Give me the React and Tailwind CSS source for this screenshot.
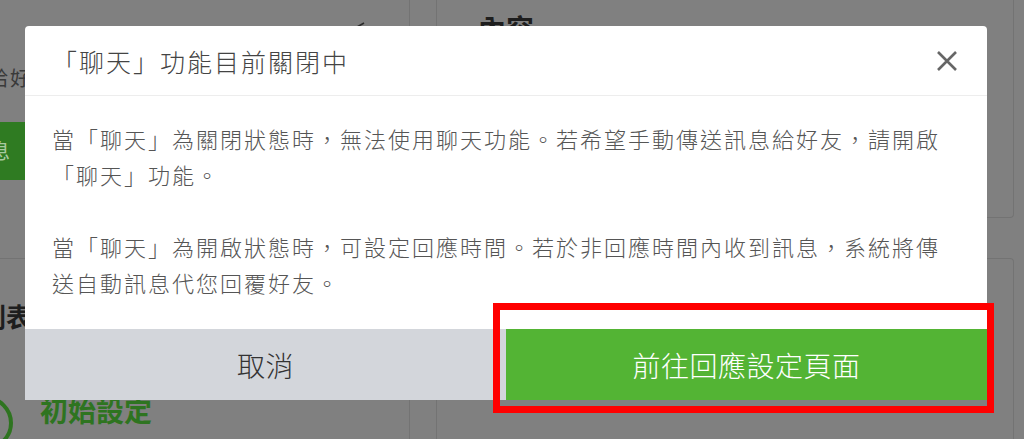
export default function App() {
  const cjk = { fontFamily: '"Noto Sans CJK TC", "Noto Sans", sans-serif' };
  return (
    <div lang="zh-TW" style={cjk} className="relative w-[1024px] h-[439px] overflow-hidden bg-[#808080]">
      {/* dimmed page underneath */}
      <div className="flex h-full">
        <div className="w-[410px] shrink-0 flex flex-col border-r border-[#737373]">
          <div className="h-[259px] shrink-0 border-b border-[#737373] pt-[66px]">
            <div className="ml-[-12px] text-[20px] leading-[24px] tracking-[2px] text-[#3a3a3a] whitespace-nowrap">給好友傳送訊息</div>
            <div className="mt-[32px] ml-[-60px] w-[200px] h-[58px] bg-[#2f7b22] flex items-center justify-end pr-[130px] text-[20px] text-[#a8c9a0]">訊息</div>
          </div>
          <div className="pt-[42px]">
            <div className="ml-[-20px] text-[26px] leading-[30px] font-bold text-[#1e1e1e] whitespace-nowrap">列表</div>
            <div className="mt-[56px] flex items-center gap-[12px] ml-[-40px]">
              <svg width="68" height="60" viewBox="0 0 68 60" className="shrink-0">
                <circle cx="26" cy="36" r="25" fill="none" stroke="#2e7420" strokeWidth="4" />
              </svg>
              <div className="text-[28px] leading-[32px] font-bold text-[#2e7420] whitespace-nowrap mt-[-14px]">初始設定</div>
            </div>
          </div>
        </div>
        <div className="w-[26px] shrink-0" />
        <div className="w-[578px] shrink-0 flex flex-col gap-[40px]">
          <div className="h-[218px] shrink-0 border-l border-r border-b border-[#737373] rounded-b-[4px] pl-[41px] pt-[12px]">
            <div className="text-[28px] leading-[32px] font-bold text-[#1e1e1e]">內容</div>
          </div>
          <div className="flex-1 border-l border-r border-t border-[#737373] rounded-t-[4px]" />
        </div>
      </div>
      <svg className="absolute left-[356px] top-[20px]" width="10" height="8" viewBox="0 0 10 8">
        <path d="M1 7 L8 3" stroke="#2a2a2a" strokeWidth="1.5" />
      </svg>

      {/* modal */}
      <div className="absolute left-[25px] top-[26px] w-[962px] h-[374px] bg-white rounded-t-[4px] flex flex-col overflow-hidden">
        <div className="h-[70px] shrink-0 border-b border-[#ededed] flex items-center justify-between pl-[27px] pr-[29px]">
          <div className="text-[25px] leading-[30px] tracking-[2px] font-light text-[#444444] whitespace-nowrap">「聊天」功能目前關閉中</div>
          <svg width="22" height="22" viewBox="0 0 22 22">
            <path d="M2 2 L20 20 M20 2 L2 20" stroke="#666666" strokeWidth="2.6" strokeLinecap="butt" />
          </svg>
        </div>
        <div className="flex-1 px-[27px] pt-[24px] text-[22px] leading-[36px] tracking-[2px] font-light text-[#555555] whitespace-nowrap">
          當「聊天」為關閉狀態時，無法使用聊天功能。若希望手動傳送訊息給好友，請開啟<br />
          「聊天」功能。<br />
          <br />
          當「聊天」為開啟狀態時，可設定回應時間。若於非回應時間內收到訊息，系統將傳<br />
          送自動訊息代您回覆好友。
        </div>
        <div className="h-[71px] shrink-0 flex">
          <button className="flex-1 bg-[#d3d6db] text-[28px] tracking-[0.5px] font-light text-[#333333] flex items-center justify-center">取消</button>
          <button className="flex-1 bg-[#53b434] text-[28px] tracking-[0.5px] font-light text-white flex items-center justify-center">前往回應設定頁面</button>
        </div>
      </div>

      {/* red highlight */}
      <div className="absolute left-[493px] top-[303px] w-[501px] h-[110px] border-[7px] border-[#ff0000]" />
    </div>
  );
}
